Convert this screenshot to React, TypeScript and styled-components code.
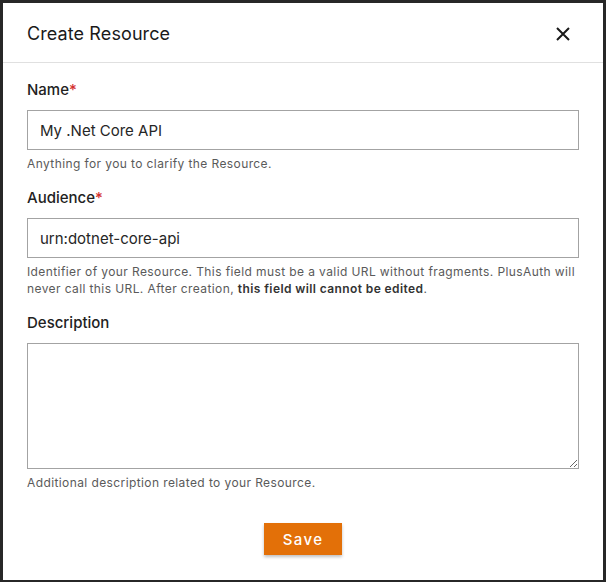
import styled, { createGlobalStyle } from 'styled-components';

const GlobalStyle = createGlobalStyle`
  html, body {
    margin: 0;
    padding: 0;
    background: #272727;
  }
  * {
    box-sizing: border-box;
  }
`;

const Backdrop = styled.div`
  padding: 3px;
  min-height: 582px;
  font-family: Inter, 'Noto Sans', sans-serif;
`;

const Dialog = styled.div`
  width: 600px;
  height: 577px;
  background: #fff;
  display: flex;
  flex-direction: column;
`;

const Header = styled.div`
  height: 60px;
  display: flex;
  align-items: center;
  justify-content: space-between;
  padding: 2px 28px 0 24px;
  border-bottom: 1px solid #e0e0e0;
`;

const Title = styled.h2`
  margin: 0;
  font-size: 18px;
  font-weight: 400;
  color: #1a1a1a;
  letter-spacing: 0.1px;
`;

const CloseButton = styled.button`
  width: 24px;
  height: 24px;
  padding: 0;
  border: none;
  background: none;
  display: flex;
  align-items: center;
  justify-content: center;
  color: #1a1a1a;
  cursor: pointer;
`;

const Body = styled.form`
  padding: 17px 24px 0;
  display: flex;
  flex-direction: column;
  gap: 16px;
`;

const Field = styled.div`
  display: flex;
  flex-direction: column;
`;

const Label = styled.label`
  font-size: 15px;
  line-height: 20px;
  font-weight: 500;
  color: #222;
  margin-bottom: 10px;
`;

const Required = styled.span`
  color: #d32f2f;
`;

const TextInput = styled.input`
  width: 100%;
  height: 40px;
  border: 1px solid #a3a3a3;
  border-radius: 0;
  padding: 0 12px;
  font-family: inherit;
  font-size: 15px;
  font-weight: 400;
  color: #262626;
  outline: none;
`;

const TextArea = styled.textarea`
  width: 100%;
  height: 126px;
  border: 1px solid #a3a3a3;
  border-radius: 0;
  padding: 10px 12px;
  font-family: inherit;
  font-size: 15px;
  resize: vertical;
  outline: none;
  display: block;
`;

const Hint = styled.div`
  margin-top: 5px;
  font-size: 12px;
  line-height: 17px;
  letter-spacing: 0.4px;
  color: #5a5a5a;

  b {
    font-weight: 600;
    color: #333;
  }
`;

const Actions = styled.div`
  display: flex;
  justify-content: center;
  margin-top: 16px;
`;

const SaveButton = styled.button`
  width: 78px;
  height: 32px;
  border: none;
  background: #e37008;
  color: #fff;
  font-family: inherit;
  font-size: 15px;
  font-weight: 500;
  letter-spacing: 1.4px;
  box-shadow: 0 2px 3px rgba(0, 0, 0, 0.25);
  cursor: pointer;
`;

export default function App() {
  return (
    <Backdrop>
      <GlobalStyle />
      <Dialog>
        <Header>
          <Title>Create Resource</Title>
          <CloseButton type="button" aria-label="Close">
            <svg width="14" height="14" viewBox="0 0 14 14">
              <path d="M1 1L13 13M13 1L1 13" stroke="currentColor" strokeWidth="2" />
            </svg>
          </CloseButton>
        </Header>
        <Body onSubmit={(e) => e.preventDefault()}>
          <Field>
            <Label>
              Name<Required>*</Required>
            </Label>
            <TextInput defaultValue="My .Net Core API" />
            <Hint>Anything for you to clarify the Resource.</Hint>
          </Field>
          <Field>
            <Label>
              Audience<Required>*</Required>
            </Label>
            <TextInput defaultValue="urn:dotnet-core-api" />
            <Hint>
              Identifier of your Resource. This field must be a valid URL without fragments. PlusAuth will
              never call this URL. After creation, <b>this field will cannot be edited</b>.
            </Hint>
          </Field>
          <Field>
            <Label>Description</Label>
            <TextArea />
            <Hint>Additional description related to your Resource.</Hint>
          </Field>
          <Actions>
            <SaveButton type="submit">Save</SaveButton>
          </Actions>
        </Body>
      </Dialog>
    </Backdrop>
  );
}
